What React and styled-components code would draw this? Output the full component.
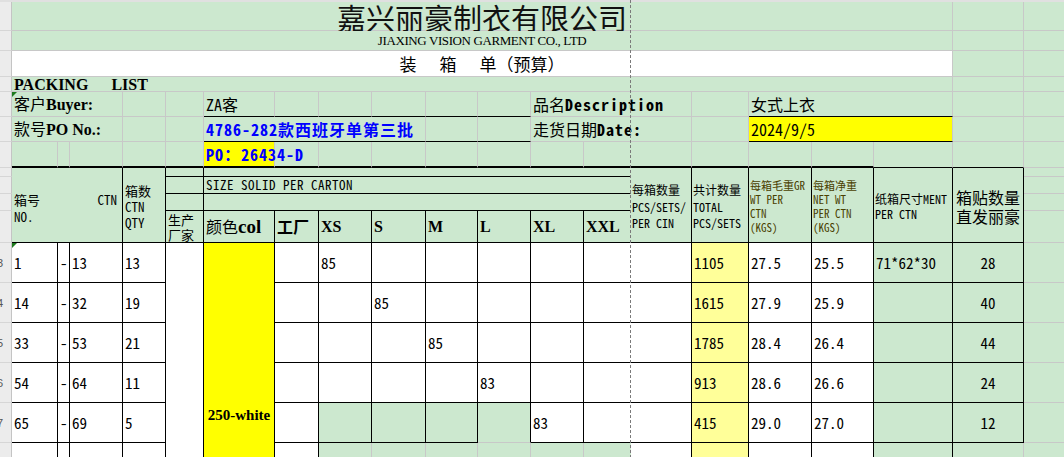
import React from "react";
import styled, { createGlobalStyle } from "styled-components";

const GREEN = "#cce8cf";
const YELLOW = "#ffff00";
const PALE = "#ffff99";
const GRID = "#c8c8c8";

const MONO = `"Noto Sans Mono CJK SC", "Liberation Mono", "Noto Sans CJK SC", monospace`;
const CJK = `"Noto Sans CJK SC", "Liberation Sans", sans-serif`;
const SERIF = `"Liberation Serif", "Noto Sans CJK SC", serif`;

const GlobalStyle = createGlobalStyle`
  html, body { margin: 0; padding: 0; background: #fff; overflow: hidden; }
  body { font-family: ${MONO}; color: #000; }
`;

// border codes: g = gridline, b = black, B = thick black, n = none
const edge = (v) =>
  v === "b" ? "1px solid #000" : v === "B" ? "2px solid #000" : v === "n" ? "1px solid transparent" : `1px solid ${GRID}`;

const cols = (a, b = a) => `${a + 1} / ${b + 2}`;
const rows = (a, b = a) => `${a + 1} / ${b + 2}`;

// --- Style --- //
const Sheet = styled.div`
  position: relative;
  display: grid;
  grid-template-columns: 12px 46px 12px 53px 43px 38px 71px 44px 53px 54px 52px 53px 53px 47px 61px 57px 63px 62px 79px 71px 80px;
  grid-template-rows: 2px 29px 20px 26px 15px 25px 25px 26px 9px 17px 17px 32px repeat(6, 40px);
  width: 1104px;
  background: ${GREEN};
`;

const ColHeadBar = styled.div`
  grid-column: 1 / -1;
  grid-row: 1;
  background: #e0e0e0;
`;

const RowHead = styled.div`
  grid-column: 1;
  grid-row: ${(p) => p.$row};
  box-sizing: border-box;
  background: #ececec;
  border-right: 1px solid #c4c4c4;
  border-bottom: 1px solid #d6d6d6;
  display: flex;
  align-items: center;
  overflow: hidden;
  font: 11px "Liberation Sans", sans-serif;
  color: #555;

  span {
    flex-shrink: 0;
    margin-left: -9px;
  }
`;

const Cell = styled.div`
  grid-column: ${(p) => p.$col};
  grid-row: ${(p) => p.$row};
  position: relative;
  z-index: ${(p) => (p.$over ? 1 : "auto")};
  box-sizing: border-box;
  min-width: 0;
  background: ${(p) => p.$bg || GREEN};
  border-right: ${(p) => edge(p.$r)};
  border-bottom: ${(p) => edge(p.$b)};
  display: flex;
  flex-direction: column;
  justify-content: ${(p) => p.$v || "center"};
  align-items: ${(p) => p.$h || "flex-start"};
  padding: ${(p) => p.$pad || "0 2px"};
  white-space: nowrap;
`;

const Flag = styled.span`
  position: absolute;
  top: 0;
  left: 0;
  border-top: 5px solid #1e7b1e;
  border-right: 5px solid transparent;
`;

const PageBreak = styled.div`
  position: absolute;
  z-index: 2;
  left: 630px;
  top: 0;
  bottom: 0;
  width: 1px;
  background: repeating-linear-gradient(to bottom, #7a7a7a 0 3px, transparent 3px 5px);
`;

const Title = styled.div`
  font-family: ${CJK};
  font-size: 29px;
  line-height: 29px;
  margin-top: 2px;
  color: #111;
`;

const EnTitle = styled.div`
  font-family: ${SERIF};
  font-size: 13px;
  line-height: 14px;
  letter-spacing: -0.4px;
`;

const Heading = styled.div`
  display: flex;
  gap: 23px;
  font-family: ${CJK};
  font-size: 17px;
  line-height: 20px;
`;

const PackList = styled.div`
  font-family: ${SERIF};
  font-weight: 700;
  font-size: 16px;
  line-height: 15px;

  span {
    margin-left: 23px;
  }
`;

const Label = styled.div`
  font-family: ${CJK};
  font-size: 16px;
  line-height: 20px;

  b {
    font-family: ${SERIF};
    font-weight: 700;
  }
`;

const Value = styled.div`
  font-family: ${MONO};
  font-size: 16px;
  line-height: 20px;
  color: ${(p) => p.$color || "#000"};
  font-weight: ${(p) => (p.$bold ? 700 : 400)};
  letter-spacing: ${(p) => (p.$bold ? "1px" : "0")};

  b {
    font-weight: 700;
    letter-spacing: 1px;
  }
`;

const HeadLines = styled.div`
  margin-top: ${(p) => p.$mt || 0}px;
  font-family: ${MONO};
  font-size: ${(p) => p.$size || 12}px;
  line-height: ${(p) => p.$lh || 16}px;
  letter-spacing: ${(p) => p.$ls || 0}px;
  color: ${(p) => p.$color || "#000"};
  text-align: ${(p) => p.$align || "left"};
`;

const SplitHead = styled.div`
  display: flex;
  justify-content: space-between;
  align-items: flex-start;
  align-self: stretch;
  margin-top: 5px;
  padding-right: 3px;
  font-family: ${MONO};
  font-size: 13px;
  line-height: 17px;
`;

const SizeHead = styled.div`
  font-family: ${SERIF};
  font-weight: 700;
  font-size: 16px;
  line-height: 20px;

  em {
    font-style: normal;
    font-family: ${CJK};
    font-weight: 400;
  }
`;

const Num = styled.div`
  font-family: ${MONO};
  font-size: 15px;
  line-height: 20px;
`;

const ColorName = styled.div`
  font-family: ${SERIF};
  font-weight: 700;
  font-size: 15px;
  line-height: 18px;
`;

// --- Data --- //
const SIZES = ["XS", "S", "M", "L", "XL", "XXL"];

const LINES = [
  { from: "1", to: "13", qty: "13", size: "XS", pcs: "85", total: "1105", gw: "27.5", nw: "25.5", dim: "71*62*30", label: "28" },
  { from: "14", to: "32", qty: "19", size: "S", pcs: "85", total: "1615", gw: "27.9", nw: "25.9", dim: "", label: "40" },
  { from: "33", to: "53", qty: "21", size: "M", pcs: "85", total: "1785", gw: "28.4", nw: "26.4", dim: "", label: "44" },
  { from: "54", to: "64", qty: "11", size: "L", pcs: "83", total: "913", gw: "28.6", nw: "26.6", dim: "", label: "24" },
  { from: "65", to: "69", qty: "5", size: "XL", pcs: "83", total: "415", gw: "29.0", nw: "27.0", dim: "", label: "12" },
];

function DataRow({ line, r, last }) {
  return (
    <>
      <Cell $col={cols(1)} $row={rows(r)} $bg="#fff" $r="b" $b="b">
        {r === 12 && <Flag />}
        <Num>{line.from}</Num>
      </Cell>
      <Cell $col={cols(2)} $row={rows(r)} $bg="#fff" $r="b" $b="b" $pad="0 0 0 2px">
        <Num>-</Num>
      </Cell>
      <Cell $col={cols(3)} $row={rows(r)} $bg="#fff" $r="b" $b="b">
        <Num>{line.to}</Num>
      </Cell>
      <Cell $col={cols(4)} $row={rows(r)} $bg="#fff" $r="b" $b="b">
        <Num>{line.qty}</Num>
      </Cell>
      <Cell $col={cols(7)} $row={rows(r)} $bg="#fff" $r="b" $b="b" />
      {SIZES.map((s, i) => {
        const c = 8 + i;
        const green = last && c <= 11;
        return (
          <Cell
            key={s}
            $col={cols(c)}
            $row={rows(r)}
            $bg={green ? GREEN : "#fff"}
            $r={c === 13 ? "n" : "b"}
            $b={last && c === 11 ? "g" : "b"}
          >
            {line.size === s && <Num>{line.pcs}</Num>}
          </Cell>
        );
      })}
      <Cell $col={cols(14)} $row={rows(r)} $bg="#fff" $r="b" $b="b" />
      <Cell $col={cols(15)} $row={rows(r)} $bg={PALE} $r="b" $b="b">
        <Num>{line.total}</Num>
      </Cell>
      <Cell $col={cols(16)} $row={rows(r)} $bg="#fff" $r="b" $b="b">
        <Num>{line.gw}</Num>
      </Cell>
      <Cell $col={cols(17)} $row={rows(r)} $bg="#fff" $r="b" $b="b">
        <Num>{line.nw}</Num>
      </Cell>
      <Cell $col={cols(18)} $row={rows(r)} $r="b" $b="b">
        <Num>{line.dim}</Num>
      </Cell>
      <Cell $col={cols(19)} $row={rows(r)} $r="b" $b="b" $h="center">
        <Num>{line.label}</Num>
      </Cell>
      <Cell $col={cols(20)} $row={rows(r)} />
    </>
  );
}

// --- Component --- //
export default function App() {
  return (
    <>
      <GlobalStyle />
      <Sheet>
        <ColHeadBar />
        {Array.from({ length: 17 }, (_, i) => (
          <RowHead key={i} $row={rows(i + 1)}>
            {i >= 11 ? <span>{i + 2}</span> : null}
          </RowHead>
        ))}

        {/* title block */}
        <Cell $col={cols(1, 18)} $row={rows(1)} $h="center">
          <Title>嘉兴丽豪制衣有限公司</Title>
        </Cell>
        <Cell $col={cols(1, 18)} $row={rows(2)} $h="center">
          <EnTitle>JIAXING VISION GARMENT CO., LTD</EnTitle>
        </Cell>
        <Cell $col={cols(1, 18)} $row={rows(3)} $bg="#fff" $h="center">
          <Heading>
            <span>装</span>
            <span>箱</span>
            <span>单（预算）</span>
          </Heading>
        </Cell>
        <Cell $col={cols(1, 18)} $row={rows(4)}>
          <PackList>
            PACKING<span>LIST</span>
          </PackList>
        </Cell>
        {[1, 2, 3, 4].map((r) => (
          <React.Fragment key={r}>
            <Cell $col={cols(19)} $row={rows(r)} />
            <Cell $col={cols(20)} $row={rows(r)} />
          </React.Fragment>
        ))}

        {/* buyer row */}
        <Cell $col={cols(1, 3)} $row={rows(5)}>
          <Flag />
          <Label>
            客户<b>Buyer:</b>
          </Label>
        </Cell>
        <Cell $col={cols(4)} $row={rows(5)} />
        <Cell $col={cols(5)} $row={rows(5)} />
        <Cell $col={cols(6)} $row={rows(5)} $b="b">
          <Value>ZA客</Value>
        </Cell>
        {[7, 8, 9, 10, 11].map((c) => (
          <Cell key={c} $col={cols(c)} $row={rows(5)} $b="b" />
        ))}
        <Cell $col={cols(12, 14)} $row={rows(5)}>
          <Value>
            品名<b>Description</b>
          </Value>
        </Cell>
        <Cell $col={cols(15)} $row={rows(5)} />
        <Cell $col={cols(16, 18)} $row={rows(5)} $b="b">
          <Value>女式上衣</Value>
        </Cell>
        <Cell $col={cols(19)} $row={rows(5)} />
        <Cell $col={cols(20)} $row={rows(5)} />

        {/* po row */}
        <Cell $col={cols(1, 3)} $row={rows(6)}>
          <Label>
            款号<b>PO No.:</b>
          </Label>
        </Cell>
        <Cell $col={cols(4)} $row={rows(6)} />
        <Cell $col={cols(5)} $row={rows(6)} />
        <Cell $col={cols(6, 9)} $row={rows(6)} $b="b">
          <Value $color="#0000ff" $bold>
            4786-282款西班牙单第三批
          </Value>
        </Cell>
        <Cell $col={cols(10)} $row={rows(6)} $b="b" />
        <Cell $col={cols(11)} $row={rows(6)} $b="b" />
        <Cell $col={cols(12, 14)} $row={rows(6)}>
          <Value>
            走货日期<b>Date:</b>
          </Value>
        </Cell>
        <Cell $col={cols(15)} $row={rows(6)} />
        <Cell $col={cols(16, 18)} $row={rows(6)} $b="b" $bg={YELLOW}>
          <Value>2024/9/5</Value>
        </Cell>
        <Cell $col={cols(19)} $row={rows(6)} />
        <Cell $col={cols(20)} $row={rows(6)} />

        {/* po number row */}
        {[1, 2, 3, 4, 5].map((c) => (
          <Cell key={c} $col={cols(c)} $row={rows(7)} $b="B" />
        ))}
        <Cell $col={cols(6)} $row={rows(7)} $b="B" $bg={YELLOW} $over>
          <Value $color="#0000ff" $bold>
            PO：26434-D
          </Value>
        </Cell>
        {[7, 8, 9, 10, 11, 12, 13, 14, 15, 16, 17].map((c) => (
          <Cell key={c} $col={cols(c)} $row={rows(7)} $b="B" $r={c === 13 ? "n" : "g"} />
        ))}
        <Cell $col={cols(18)} $row={rows(7)} $b="b" />
        <Cell $col={cols(19)} $row={rows(7)} $b="b" />
        <Cell $col={cols(20)} $row={rows(7)} />

        {/* table header */}
        <Cell $col={cols(1, 3)} $row={rows(8, 11)} $r="b" $b="b">
          <SplitHead>
            <div>
              <span style={{ fontFamily: CJK }}>箱号</span>
              <br />
              NO.
            </div>
            <div>CTN</div>
          </SplitHead>
        </Cell>
        <Cell $col={cols(4)} $row={rows(8, 11)} $r="b" $b="b">
          <HeadLines $size={13} $lh={16} $mt={3}>
            箱数
            <br />
            CTN
            <br />
            QTY
          </HeadLines>
        </Cell>
        <Cell $col={cols(5)} $row={rows(8)} $r="b" $b="b" />
        <Cell $col={cols(5)} $row={rows(9)} $r="b" $b="b" />
        <Cell $col={cols(5)} $row={rows(10)} $r="b" $b="b" />
        <Cell $col={cols(5)} $row={rows(11)} $r="b" $b="b">
          <HeadLines $size={13} $lh={15}>
            生产
            <br />
            厂家
          </HeadLines>
        </Cell>
        <Cell $col={cols(6, 13)} $row={rows(8)} $r="n" $b="b" />
        <Cell $col={cols(6, 13)} $row={rows(9)} $r="n" $b="b">
          <HeadLines $size={13} $lh={16} $ls={0.5}>
            SIZE SOLID PER CARTON
          </HeadLines>
        </Cell>
        <Cell $col={cols(6, 13)} $row={rows(10)} $r="n" $b="b" />
        <Cell $col={cols(6)} $row={rows(11)} $r="b" $b="b">
          <SizeHead>
            <em>颜色</em>
            <span style={{ fontSize: 19 }}>col</span>
          </SizeHead>
        </Cell>
        <Cell $col={cols(7)} $row={rows(11)} $r="b" $b="b">
          <SizeHead>
            <em style={{ fontWeight: 700 }}>工厂</em>
          </SizeHead>
        </Cell>
        {SIZES.map((s, i) => (
          <Cell key={s} $col={cols(8 + i)} $row={rows(11)} $r={i === 5 ? "n" : "b"} $b="b">
            <SizeHead>{s}</SizeHead>
          </Cell>
        ))}
        <Cell $col={cols(14)} $row={rows(8, 11)} $r="b" $b="b" $pad="0 1px">
          <HeadLines $size={12} $lh={16.5} $mt={4}>
            每箱数量
            <br />
            PCS/SETS/
            <br />
            PER CIN
          </HeadLines>
        </Cell>
        <Cell $col={cols(15)} $row={rows(8, 11)} $r="b" $b="b" $pad="0 1px">
          <HeadLines $size={12} $lh={16.5} $mt={4}>
            共计数量
            <br />
            TOTAL
            <br />
            PCS/SETS
          </HeadLines>
        </Cell>
        <Cell $col={cols(16)} $row={rows(8, 11)} $r="b" $b="b" $pad="0 1px">
          <HeadLines $size={11} $lh={14} $mt={1} $color="#4a4000">
            每箱毛重GR
            <br />
            WT PER
            <br />
            CTN
            <br />
            (KGS)
          </HeadLines>
        </Cell>
        <Cell $col={cols(17)} $row={rows(8, 11)} $r="b" $b="b" $pad="0 1px">
          <HeadLines $size={11} $lh={14} $mt={1} $color="#4a4000">
            每箱净重
            <br />
            NET WT
            <br />
            PER CTN
            <br />
            (KGS)
          </HeadLines>
        </Cell>
        <Cell $col={cols(18)} $row={rows(8, 11)} $r="b" $b="b" $pad="0 1px">
          <HeadLines $size={12} $lh={15} $mt={2}>
            纸箱尺寸MENT
            <br />
            PER CTN
          </HeadLines>
        </Cell>
        <Cell $col={cols(19)} $row={rows(8, 11)} $r="b" $b="b" $h="center">
          <HeadLines $size={16} $lh={19} $mt={3} $align="center" style={{ fontFamily: CJK }}>
            箱贴数量
            <br />
            直发丽豪
          </HeadLines>
        </Cell>
        {[8, 9, 10, 11].map((r) => (
          <Cell key={r} $col={cols(20)} $row={rows(r)} />
        ))}

        {/* lines */}
        <Cell $col={cols(5)} $row={rows(12, 17)} $bg="#fff" $r="b" $b="n" />
        <Cell $col={cols(6)} $row={rows(12, 17)} $bg={YELLOW} $r="b" $b="n" $v="flex-start" $h="center" $pad="163px 0 0">
          <ColorName>250-white</ColorName>
        </Cell>
        {LINES.map((line, i) => (
          <DataRow key={line.from} line={line} r={12 + i} last={i === LINES.length - 1} />
        ))}

        {/* trailing row */}
        {[1, 2, 3, 4, 7].map((c) => (
          <Cell key={c} $col={cols(c)} $row={rows(17)} $bg="#fff" $r="b" $b="b" />
        ))}
        {[8, 9, 10, 11, 12, 13].map((c) => (
          <Cell key={c} $col={cols(c)} $row={rows(17)} $r={c === 13 ? "n" : "g"} />
        ))}
        <Cell $col={cols(14)} $row={rows(17)} $bg="#fff" $r="b" />
        <Cell $col={cols(15)} $row={rows(17)} $bg={PALE} $r="b" />
        <Cell $col={cols(16)} $row={rows(17)} $bg="#fff" $r="b" />
        <Cell $col={cols(17)} $row={rows(17)} $bg="#fff" $r="b" />
        <Cell $col={cols(18)} $row={rows(17)} $r="b" />
        <Cell $col={cols(19)} $row={rows(17)} />
        <Cell $col={cols(20)} $row={rows(17)} />

        <PageBreak />
      </Sheet>
    </>
  );
}
